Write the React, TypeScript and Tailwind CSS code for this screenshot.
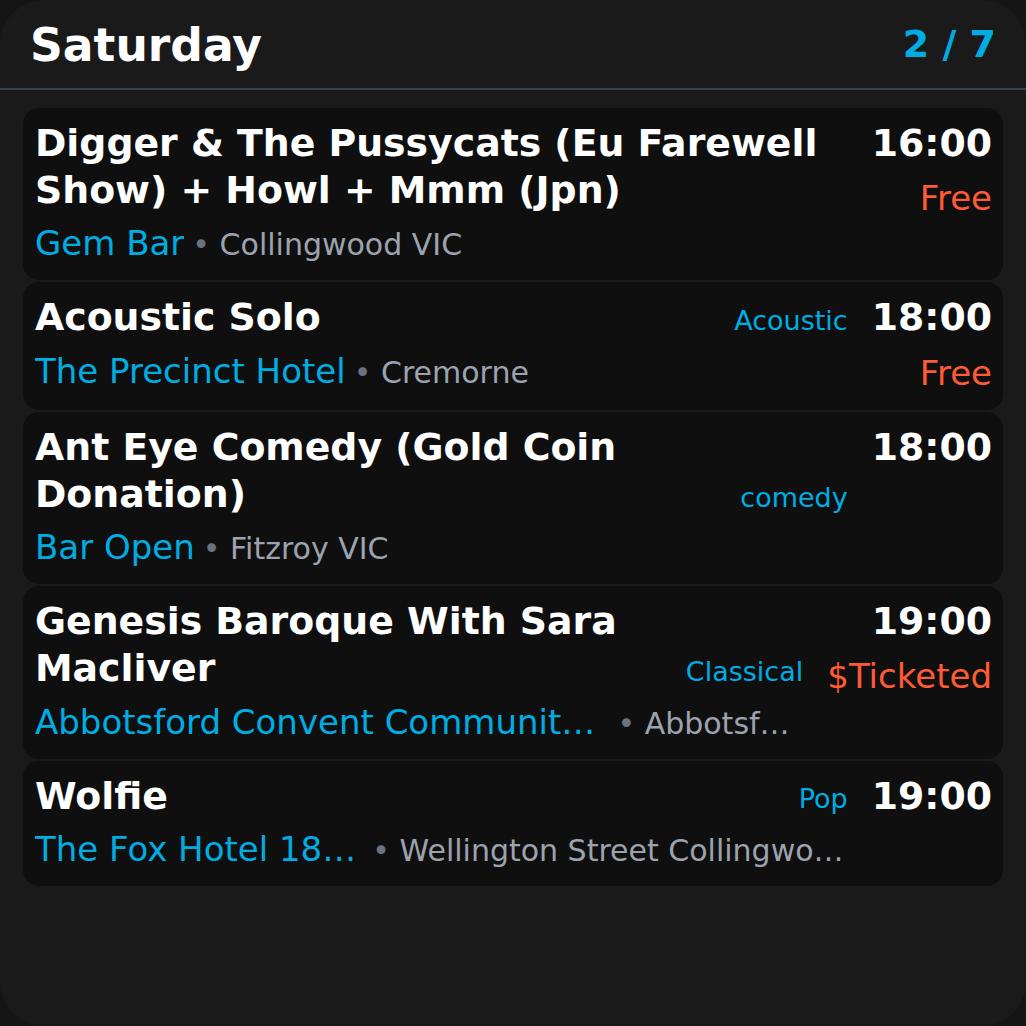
import React from 'react';

interface Gig {
  title: string;
  time: string;
  venue: string;
  location: string;
  tag?: string;
  price?: string;
}

const gigs: Gig[] = [
  {
    title: 'Digger & The Pussycats (Eu Farewell Show) + Howl + Mmm (Jpn)',
    time: '16:00',
    price: 'Free',
    venue: 'Gem Bar',
    location: 'Collingwood VIC',
  },
  {
    title: 'Acoustic Solo',
    tag: 'Acoustic',
    time: '18:00',
    price: 'Free',
    venue: 'The Precinct Hotel',
    location: 'Cremorne',
  },
  {
    title: 'Ant Eye Comedy (Gold Coin Donation)',
    tag: 'comedy',
    time: '18:00',
    venue: 'Bar Open',
    location: 'Fitzroy VIC',
  },
  {
    title: 'Genesis Baroque With Sara Macliver',
    tag: 'Classical',
    time: '19:00',
    price: '$Ticketed',
    venue: 'Abbotsford Convent Community Hall, Stage A',
    location: 'Abbotsford VIC',
  },
  {
    title: 'Wolfie',
    tag: 'Pop',
    time: '19:00',
    venue: 'The Fox Hotel 18+ Up',
    location: 'Wellington Street Collingwood VIC',
  },
];

const GigCard: React.FC<{ gig: Gig }> = ({ gig }) => (
  <div className="bg-[#0f0f0f] rounded-2xl pt-[12px] pb-[11px] pl-[12px] pr-[11px] flex gap-6">
    <div className="flex-1 min-w-0">
      <div className="flex items-end gap-6">
        <h3 className="flex-1 min-w-0 text-[37.8px] leading-[1.25] font-bold text-white">{gig.title}</h3>
        {gig.tag && (
          <span className="shrink-0 text-[27px] leading-normal text-[#00ade3] pt-[2px]">{gig.tag}</span>
        )}
      </div>
      <div className="mt-1 flex items-baseline min-w-0 leading-normal">
        <span className="truncate text-[34px] text-[#00ade3]">{gig.venue}</span>
        <span className="ml-2 truncate text-[30px] text-[#9ca3af]">
          <span className="text-[#6b7280]">•</span> {gig.location}
        </span>
      </div>
    </div>
    <div className="shrink-0 text-right">
      <div className="text-[37.8px] leading-[1.25] font-bold text-white">{gig.time}</div>
      {gig.price && (
        <div className="mt-1.5 text-[34px] leading-normal text-[#ff5a36]">{gig.price}</div>
      )}
    </div>
  </div>
);

export default function App() {
  return (
    <div className="bg-[#151515] min-h-screen font-['DejaVu_Sans',sans-serif]">
      <div className="bg-[#1a1a1a] h-[1026px] rounded-[44px] overflow-hidden">
        <header className="flex items-center justify-between px-[30px] pt-[18px] pb-[13px] border-b-2 border-[#374151]">
          <h1 className="text-[45.6px] leading-[1.25] font-bold text-white">Saturday</h1>
          <span className="pb-[3px] text-[38px] leading-[1.25] font-bold text-[#00ade3]">2 / 7</span>
        </header>
        <div className="px-[23px] pt-[18px] flex flex-col gap-[2px]">
          {gigs.map((g) => (
            <GigCard key={g.title} gig={g} />
          ))}
        </div>
      </div>
    </div>
  );
}
